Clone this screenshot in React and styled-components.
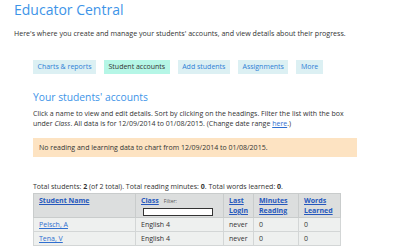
import React from "react";
import styled, { createGlobalStyle } from "styled-components";

const Global = createGlobalStyle`
  html, body { margin: 0; padding: 0; background: #fff; }
  body { font-family: "Open Sans", "DejaVu Sans", sans-serif; color: #333; }
`;

const Page = styled.div`
  width: 400px;
  height: 250px;
  overflow: hidden;
  padding: 0 14px;
  box-sizing: border-box;
`;

const Title = styled.h1`
  margin: 0;
  font-size: 14px;
  font-weight: 400;
  color: #3d94e8;
  line-height: 20px;
`;

const Intro = styled.p`
  margin: 8px 0 0;
  font-size: 7.1px;
  line-height: 10px;
`;

const Section = styled.div`
  padding-left: 19px;
`;

const Tabs = styled.div`
  display: flex;
  gap: 8px;
  margin-top: 22px;
`;

const Tab = styled.div`
  background: ${(p) => (p.$active ? "#b5f6e6" : "#dcf0f3")};
  color: ${(p) => (p.$active ? "#333" : "#2f7fd6")};
  font-size: 7px;
  line-height: 14px;
  padding: 0 4.5px;
`;

const Heading = styled.h2`
  margin: 15px 0 0;
  font-size: 10.3px;
  font-weight: 400;
  color: #3d94e8;
  line-height: 17px;
`;

const Para = styled.p`
  margin: 3px 0 0;
  font-size: 7px;
  line-height: 9.5px;
`;

const Link = styled.a`
  color: #2f6fd0;
  text-decoration: underline;
`;

const Notice = styled.div`
  margin-top: 10px;
  width: 324px;
  background: #fde3c2;
  font-size: 7px;
  line-height: 19px;
  padding: 0 6px;
  box-sizing: border-box;
`;

const Totals = styled.p`
  margin: 25px 0 0;
  font-size: 7px;
  line-height: 10px;
`;

const Table = styled.table`
  border-collapse: collapse;
  table-layout: fixed;
  width: 307px;
  font-size: 7px;
  margin-top: 1px;
`;

const Th = styled.th`
  box-sizing: border-box;
  background: #dcdede;
  border: 1px solid #c9cccc;
  text-align: left;
  vertical-align: top;
  padding: 2px 5px 1px;
  width: ${(p) => p.$w}px;
  line-height: 10px;
  font-weight: 700;
`;

const Td = styled.td`
  background: #eef0ef;
  border: 1px solid #d3d6d6;
  padding: 2px 5px 1px;
  line-height: 10px;
`;

const HeadLink = styled.a`
  color: #2658bd;
  text-decoration: underline;
  font-weight: 700;
`;

const FilterLabel = styled.span`
  font-size: 5px;
  font-weight: 400;
  color: #555;
  margin-left: 5px;
`;

const FilterInput = styled.div`
  box-sizing: border-box;
  width: 70px;
  height: 8px;
  border: 1px solid #333;
  background: #fff;
  margin: 2px 0 0 2px;
`;

export default function App() {
  return (
    <>
      <Global />
      <Page>
        <Title>Educator Central</Title>
        <Intro>
          Here's where you create and manage your students' accounts, and view details about their progress.
        </Intro>
        <Section>
          <Tabs>
            <Tab>Charts &amp; reports</Tab>
            <Tab $active>Student accounts</Tab>
            <Tab>Add students</Tab>
            <Tab>Assignments</Tab>
            <Tab>More</Tab>
          </Tabs>
          <Heading>Your students' accounts</Heading>
          <Para>
            Click a name to view and edit details. Sort by clicking on the headings. Filter the list with the box
            <br />
            under <i>Class</i>. All data is for 12/09/2014 to 01/08/2015. (Change date range <Link>here</Link>.)
          </Para>
          <Notice>No reading and learning data to chart from 12/09/2014 to 01/08/2015.</Notice>
          <Totals>
            Total students: <b>2</b> (of 2 total). Total reading minutes: <b>0</b>. Total words learned: <b>0</b>.
          </Totals>
          <Table>
            <thead>
              <tr>
                <Th $w={102}><HeadLink>Student Name</HeadLink></Th>
                <Th $w={88}>
                  <HeadLink>Class</HeadLink>
                  <FilterLabel>Filter:</FilterLabel>
                  <FilterInput />
                </Th>
                <Th $w={30}><HeadLink>Last<br />Login</HeadLink></Th>
                <Th $w={45}><HeadLink>Minutes<br />Reading</HeadLink></Th>
                <Th $w={42}><HeadLink>Words<br />Learned</HeadLink></Th>
              </tr>
            </thead>
            <tbody>
              <tr>
                <Td><Link>Pelsch, A</Link></Td>
                <Td>English 4</Td>
                <Td>never</Td>
                <Td>0</Td>
                <Td>0</Td>
              </tr>
              <tr>
                <Td><Link>Tena, V</Link></Td>
                <Td>English 4</Td>
                <Td>never</Td>
                <Td>0</Td>
                <Td>0</Td>
              </tr>
            </tbody>
          </Table>
        </Section>
      </Page>
    </>
  );
}
